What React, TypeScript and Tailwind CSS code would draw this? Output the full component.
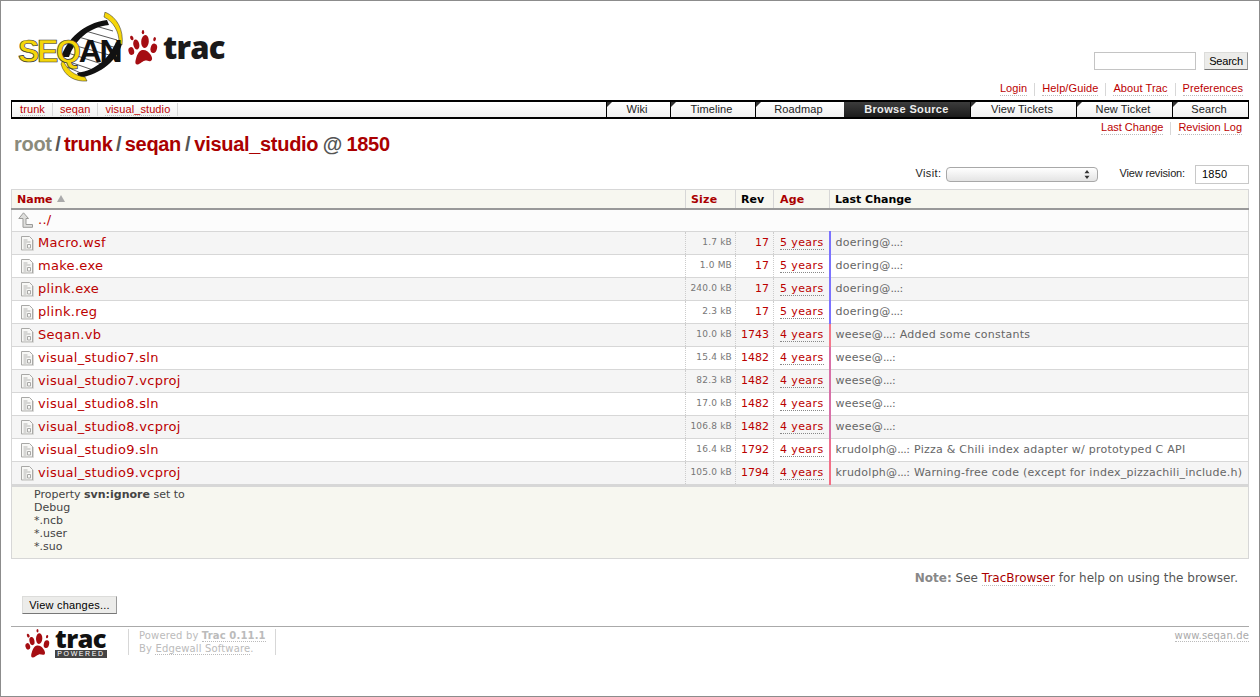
import React from "react";

const rows: [string, string, string, string, string, string, string][] = [
  ["Macro.wsf", "1.7 kB", "17", "5 years", "doering@", "", "#7b72ff"],
  ["make.exe", "1.0 MB", "17", "5 years", "doering@", "", "#7b72ff"],
  ["plink.exe", "240.0 kB", "17", "5 years", "doering@", "", "#7b72ff"],
  ["plink.reg", "2.3 kB", "17", "5 years", "doering@", "", "#7b72ff"],
  ["Seqan.vb", "10.0 kB", "1743", "4 years", "weese@", "Added some constants", "#f4788a"],
  ["visual_studio7.sln", "15.4 kB", "1482", "4 years", "weese@", "", "#d870a8"],
  ["visual_studio7.vcproj", "82.3 kB", "1482", "4 years", "weese@", "", "#d870a8"],
  ["visual_studio8.sln", "17.0 kB", "1482", "4 years", "weese@", "", "#d870a8"],
  ["visual_studio8.vcproj", "106.8 kB", "1482", "4 years", "weese@", "", "#d870a8"],
  ["visual_studio9.sln", "16.4 kB", "1792", "4 years", "krudolph@", "Pizza & Chili index adapter w/ prototyped C API", "#ee7090"],
  ["visual_studio9.vcproj", "105.0 kB", "1794", "4 years", "krudolph@", "Warning-free code (except for index_pizzachili_include.h)", "#f46f85"],
];

const tabs: [string, string][] = [
  ["Wiki", "w-[64px]"],
  ["Timeline", "w-[85px]"],
  ["Roadmap", "w-[89px]"],
  ["Browse Source", "w-[126px]"],
  ["View Tickets", "w-[106px]"],
  ["New Ticket", "w-[96px]"],
  ["Search", "w-[76px]"],
];

function Paw({ width, height, color = "#a50d12" }: { width: number; height: number; color?: string }) {
  return (
    <svg width={width} height={height} viewBox="0 0 30 35" className="shrink-0" aria-hidden="true">
      <g fill={color}>
        <ellipse cx="15" cy="2.2" rx="1.2" ry="2.1" />
        <ellipse cx="3.8" cy="8" rx="1.6" ry="2.4" transform="rotate(-20 3.800 8)" />
        <ellipse cx="26.600" cy="9.200" rx="1.300" ry="2.100" transform="rotate(15 26.600 9.200)" />
        <ellipse cx="8.300" cy="14.500" rx="3" ry="5" transform="rotate(-12 8.300 14.500)" />
        <ellipse cx="17" cy="11.500" rx="3.800" ry="6.500" transform="rotate(4 17 11.500)" />
        <ellipse cx="25.800" cy="18.300" rx="3.200" ry="4.800" transform="rotate(14 25.800 18.300)" />
        <ellipse cx="3.300" cy="21" rx="2.800" ry="4" transform="rotate(-15 3.300 21)" />
        <path d="M14.500 20c3.500-.3 6 1.800 8 4.600 1.800 2.700 2.400 5.400.2 6.400-2 .8-3.700-.8-6-.3-3 .7-5.300 4-7.600 3.800-2.400-.3-1.800-3.500-1-6 1-3.800 3-8.200 6.400-8.500z" />
      </g>
    </svg>
  );
}

function SeqanLogo() {
  return (
    <svg width="106" height="72" viewBox="0 0 106 72" className="shrink-0" aria-hidden="true">
      <path d="M50 40 C54 26 68 12 90 10 C98 14 104 22 103 34 C98 48 84 62 62 65 C54 62 48 54 50 40z" fill="#fff" />
      <g stroke="#444" strokeWidth="0.9">
        <line x1="75" y1="13" x2="96" y2="19" />
        <line x1="65" y1="18" x2="100" y2="28" />
        <line x1="58" y1="24" x2="100" y2="36" />
        <line x1="52" y1="32" x2="96" y2="44" />
        <line x1="48" y1="40" x2="88" y2="53" />
        <line x1="47" y1="48" x2="76" y2="58" />
        <line x1="50" y1="55" x2="66" y2="62" />
      </g>
      <path d="M44 45 C50 28 66 11 90 8 L92 13 C72 15 58 28 52 45z" fill="#111" />
      <path d="M105 32 C100 48 85 62 62 66 L60 61 C80 58 92 46 99 30z" fill="#111" />
      <path d="M88 0 C100 5 107 18 105 33 L102 30 C102 20 97 10 87 5z" fill="#f5d60a" stroke="#222" strokeWidth="0.5" />
      <path d="M46 48 C50 58 58 64 68 65 L70 69 C58 70 47 64 44 52z" fill="#f5d60a" stroke="#222" strokeWidth="0.5" />
      <text x="1" y="50" fontFamily="'Liberation Sans', sans-serif" fontWeight="700" fontSize="32" letterSpacing="-2.3">
        <tspan fill="#f5d60a" stroke="#333" strokeWidth="0.7">SEQ</tspan>
        <tspan fill="#111">AN</tspan>
      </text>
    </svg>
  );
}

function FileIcon() {
  return (
    <svg width="13" height="15" viewBox="0 0 13 15" className="shrink-0" aria-hidden="true">
      <path d="M.5.500h8l3 3v10.500H.5z" fill="#f8f8f6" stroke="#a8a8a6" />
      <path d="M12.500 4v10.500H1.500" fill="none" stroke="#d8d8d6" />
      <path d="M2.500 4h4M2.500 6h7M2.500 8h3M2.500 10h3M2.500 12h3" stroke="#b4b4b2" />
      <path d="M6.500 8.500h3v3.500h-3z" fill="none" stroke="#a8a8a6" />
    </svg>
  );
}

function UpIcon() {
  return (
    <svg width="15" height="16" viewBox="0 0 15 16" className="shrink-0" aria-hidden="true">
      <path d="M5.500.8 10.500 6.500H8v6h6.500v2.800H5V6.500H.8z" fill="#dededc" stroke="#9b9b99" strokeWidth="1" />
    </svg>
  );
}

function Corner() {
  return <span className="absolute left-0 top-0 w-0 h-0 border-t-[5px] border-r-[5px] border-t-[#333] border-r-transparent" />;
}

const dotted = "border-b border-dotted border-[#bbb]";

export default function App() {
  return (
    <div className="h-[697px] w-[1260px] overflow-hidden border border-[#8c8c8c] bg-white text-[#333] font-['DejaVu_Sans',sans-serif] text-[11px]">
      <header className="flex justify-between h-[99px]">
        <div className="flex items-center ml-[16px] mt-[11px] h-[72px]">
          <SeqanLogo />
          <div className="ml-[5px] mt-[-1px]"><Paw width={30} height={35} /></div>
          <span className="ml-[5px] mt-[-1px] font-['Open_Sans',sans-serif] font-extrabold text-[31px] leading-none tracking-[-0.8px] text-[#1a1a1a]">trac</span>
        </div>
        <div className="flex flex-col items-end mr-[10px] font-['Liberation_Sans',sans-serif]">
          <div className="flex items-center mt-[51px] mr-[1px] h-[18px]">
            <div className="w-[102px] h-[18px] border border-[#c4c4c4] bg-white" />
            <button className="ml-[8px] w-[44px] h-[18px] bg-[#ececea] border border-[#dcdcda] border-b-[#777] border-r-[#999] text-[11px] tracking-[-0.2px] text-black leading-none">Search</button>
          </div>
          <nav className="flex items-center mt-[12px] mr-[6px] text-[11px] tracking-[0.1px] text-[#b00]">
            <a className={dotted + " leading-[13px]"}>Login</a>
            <span className="w-px h-[13px] bg-[#d7d7d7] mx-[7px]" />
            <a className={dotted + " leading-[13px]"}>Help/Guide</a>
            <span className="w-px h-[13px] bg-[#d7d7d7] mx-[7px]" />
            <a className={dotted + " leading-[13px]"}>About Trac</a>
            <span className="w-px h-[13px] bg-[#d7d7d7] mx-[7px]" />
            <a className={dotted + " leading-[13px]"}>Preferences</a>
          </nav>
        </div>
      </header>

      <div className="mx-[10px] h-[19px] flex border-y-2 border-x border-black bg-gradient-to-b from-white to-[#f0f0f0] font-['Liberation_Sans',sans-serif] text-[11px]">
        <div className="flex-1 flex items-center pl-[1px] tracking-[0.1px]">
          {["trunk", "seqan", "visual_studio"].map((c) => (
            <div key={c} className="h-[13px] flex items-center px-[7px] border-r border-[#d7d7d7]">
              <a className={"text-[#b00] leading-[12px] " + dotted}>{c}</a>
            </div>
          ))}
        </div>
        {tabs.map(([t, w]) =>
          t === "Browse Source" ? (
            <div key={t} className={w + " flex items-center justify-center pr-[1px] tracking-[0.35px] bg-gradient-to-b from-[#3c3c3c] to-[#1c1c1c] text-[#eee] font-bold"}>{t}</div>
          ) : (
            <div key={t} className={w + " relative flex items-center justify-center pr-[3px] tracking-[0.1px] border-l border-black text-[#222]"}>
              <Corner />
              {t}
            </div>
          )
        )}
      </div>

      <nav className="flex justify-end items-center mt-[2px] mr-[17px] h-[14px] text-[#b00] font-['Liberation_Sans',sans-serif] text-[11px]">
        <a className={dotted + " leading-[13px]"}>Last Change</a>
        <span className="w-px h-[13px] bg-[#d7d7d7] mx-[7px]" />
        <a className={dotted + " leading-[13px]"}>Revision Log</a>
      </nav>

      <h1 className="ml-[13px] mt-[-3px] h-[24px] flex items-center font-['Liberation_Sans',sans-serif] font-bold text-[20px] tracking-[-0.3px] text-[#a00]">
        <span className="text-[#8b8b7b]">root</span>
        <span className="text-[#555] mx-[3.5px]">/</span>
        <span>trunk</span>
        <span className="text-[#555] mx-[3.5px]">/</span>
        <span>seqan</span>
        <span className="text-[#555] mx-[4px]">/</span>
        <span>visual_studio</span>
        <span className="text-[#555] mx-[4.5px]">@</span>
        <span>1850</span>
      </h1>

      <div className="flex justify-end items-center h-[19px] mt-[9px] mr-[10px] font-['Liberation_Sans',sans-serif] text-[11px] text-[#222]">
        <span className="mt-[-3px] tracking-[0.4px]">Visit:</span>
        <div className="ml-[5px] w-[152px] h-[15px] rounded-[4px] border border-[#a8a8a8] bg-gradient-to-b from-white to-[#e4e4e4] flex items-center justify-end pr-[7px]">
          <svg width="6" height="9" viewBox="0 0 6 9" aria-hidden="true"><path d="M3 0 5.500 3.200H.5zM3 9 .5 5.800h5z" fill="#333" /></svg>
        </div>
        <span className="ml-[21px] mt-[-3px] tracking-[-0.15px]">View revision:</span>
        <div className="ml-[10px] w-[54px] h-[19px] border border-[#c8c8c8] pl-[6px] flex items-center text-[11px] tracking-[0.2px] text-black">1850</div>
      </div>

      <table className="ml-[10px] mt-[5px] w-[1238px] table-fixed border-collapse border-x border-t border-[#d7d7d7]">
        <thead>
          <tr className="h-[19px] bg-[#f7f7f0] border-b-2 border-[#999] text-[11px] leading-[13px] font-bold">
            <th className="w-[674px] text-left pl-[5px] pt-[2px] text-[#a00] font-bold">
              Name <span className="inline-block ml-[1px] align-[1px] w-0 h-0 border-x-[4px] border-x-transparent border-b-[7px] border-b-[#aaa]" />
            </th>
            <th className="w-[50px] text-left pl-[5px] pt-[2px] tracking-[0.2px] text-[#a00] border-l border-[#d7d7d7] font-bold">Size</th>
            <th className="w-[38px] text-left pl-[5px] pt-[2px] text-black border-l border-[#d7d7d7] font-bold">Rev</th>
            <th className="w-[56px] text-left pl-[6px] pt-[2px] tracking-[0.2px] text-[#a00] border-l border-[#d7d7d7] font-bold">Age</th>
            <th className="text-left pl-[5px] pt-[2px] text-black border-l border-[#d7d7d7] font-bold">Last Change</th>
          </tr>
        </thead>
        <tbody>
          <tr className="h-[23px] bg-[#fcfcfc] border-b border-[#d7d7d7]">
            <td colSpan={5} className="pl-[6px]">
              <div className="flex items-center gap-[5px] text-[13px] leading-[16px] tracking-[0.3px] text-[#b00]"><UpIcon /><span>../</span></div>
            </td>
          </tr>
          {rows.map((r, i) => (
            <tr key={r[0]} className={"h-[23px] border-b border-[#d7d7d7] " + (i % 2 === 0 ? "bg-[#f5f5f5]" : "bg-white")}>
              <td className="pl-[9px]">
                <div className="flex items-center gap-[4px] text-[13px] leading-[16px] tracking-[0.3px] text-[#b00]"><FileIcon /><span>{r[0]}</span></div>
              </td>
              <td className="text-right pr-[3px] text-[9px] tracking-[0.2px] text-[#777] border-l border-dotted border-[#ccc]">{r[1]}</td>
              <td className="text-right pr-[4px] text-[11px] text-[#b00] border-l border-dotted border-[#ccc]">{r[2]}</td>
              <td className="pl-[6px] text-[11px] tracking-[0.4px] text-[#b00] border-l border-dotted border-[#ccc]">
                <a className="leading-[13px] border-b border-dotted border-[#888]">{r[3]}</a>
              </td>
              <td className="pl-[5px] text-[11px] tracking-[0.25px] text-[#666] border-l-2" style={{ borderLeftColor: r[6] }}>
                <span className="whitespace-nowrap">{r[4]}<span className="tracking-[-0.5px]">...</span>:{r[5] ? " " + r[5] : ""}</span>
              </td>
            </tr>
          ))}
        </tbody>
      </table>

      <div className="ml-[10px] w-[1238px] h-[74px] bg-[#f7f7f0] border-x border-b border-t-2 border-[#d7d7d7] pl-[22px] pt-[1px] text-[11px] leading-[13px] text-[#444]">
        <div>Property <strong>svn:ignore</strong> set to</div>
        <div>Debug</div>
        <div>*.ncb</div>
        <div>*.user</div>
        <div>*.suo</div>
      </div>

      <div className="flex justify-end mt-[11px] mr-[21px] h-[16px] items-center text-[12px] text-[#555]">
        <span><strong className="text-[#888]">Note:</strong> See <a className="text-[#a00] border-b border-dotted border-[#bbb]">TracBrowser</a> for help on using the browser.</span>
      </div>

      <button className="block ml-[21px] mt-[10px] w-[95px] h-[18px] bg-[#ececea] border border-[#dcdcda] border-b-[#777] border-r-[#999] font-['Liberation_Sans',sans-serif] text-[11px] tracking-[0.2px] text-black leading-none">View changes...</button>

      <footer className="mx-[10px] mt-[12px] border-t border-[#aaa] flex text-[10px] text-[#bbb] leading-[13px] tracking-[0.15px]">
        <div className="flex items-start w-[117px] h-[33px] pl-[14px] mt-[2px]">
          <Paw width={25} height={29} />
          <div className="ml-[5px] mt-[-1px] flex flex-col items-stretch w-[52px]">
            <span className="font-['Open_Sans',sans-serif] font-extrabold text-[25.5px] h-[21px] leading-[21px] tracking-[-0.6px] text-[#111]">trac</span>
            <span className="mt-[1px] h-[8px] bg-[#444] text-white text-[7px] leading-[8px] tracking-[1.6px] text-center font-['Liberation_Sans',sans-serif]">POWERED</span>
          </div>
        </div>
        <div className="mt-[2px] h-[26px] border-l border-r border-[#d7d7d7] pl-[10px] pr-[10px] w-[148px] whitespace-nowrap">
          <div>Powered by <a className={"font-bold " + dotted}>Trac 0.11.1</a></div>
          <div>By <a className={dotted}>Edgewall Software</a>.</div>
        </div>
        <div className="flex-1 text-right mt-[2px] text-[#aaa]"><a className={dotted}>www.seqan.de</a></div>
      </footer>
    </div>
  );
}
